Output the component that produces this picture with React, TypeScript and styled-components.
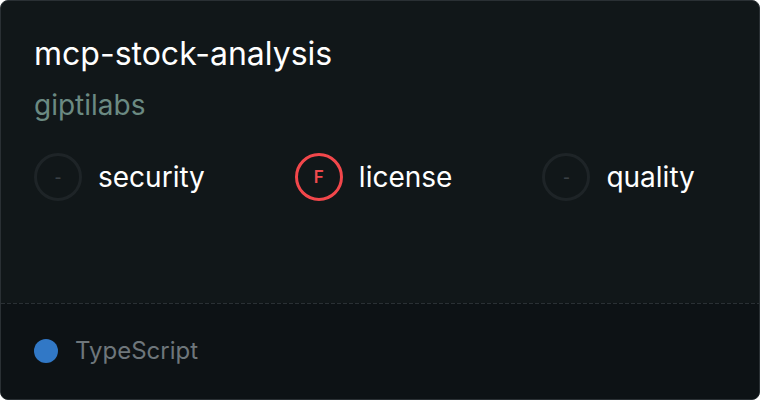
import styled, { createGlobalStyle } from "styled-components";

const Global = createGlobalStyle`
  html, body {
    margin: 0;
    padding: 0;
    background: #ffffff;
  }
  body {
    font-family: Inter, "Noto Sans", sans-serif;
  }
`;

type Score = {
  label: string;
  grade: string;
  failed?: boolean;
};

const scores: Score[] = [
  { label: "security", grade: "-" },
  { label: "license", grade: "F", failed: true },
  { label: "quality", grade: "-" },
];

const App = () => {
  return (
    <>
      <Global />
      <Card>
        <Top>
          <Title>mcp-stock-analysis</Title>
          <Owner>giptilabs</Owner>
          <Scores>
            {scores.map((s) => (
              <ScoreItem key={s.label}>
                <Grade $failed={s.failed}>{s.grade}</Grade>
                <ScoreLabel>{s.label}</ScoreLabel>
              </ScoreItem>
            ))}
          </Scores>
        </Top>
        <Footer>
          <LangDot />
          <LangName>TypeScript</LangName>
        </Footer>
      </Card>
    </>
  );
};

export default App;

const Card = styled.div`
  width: 760px;
  height: 400px;
  box-sizing: border-box;
  border: 1px solid #2a3034;
  border-radius: 8px;
  overflow: hidden;
  display: flex;
  flex-direction: column;
  background: #111719;
`;

const Top = styled.div`
  flex: 1;
  padding: 33px 33px 0;
  display: flex;
  flex-direction: column;
`;

const Title = styled.div`
  color: #ffffff;
  font-size: 32px;
  line-height: 40px;
  font-weight: 400;
`;

const Owner = styled.div`
  color: #6b8a82;
  font-size: 28px;
  line-height: 34px;
  margin-top: 14px;
`;

const Scores = styled.div`
  display: flex;
  align-items: center;
  gap: 90px;
  margin-top: 31px;
`;

const ScoreItem = styled.div`
  display: flex;
  align-items: center;
  gap: 16px;
`;

const Grade = styled.div<{ $failed?: boolean }>`
  width: 48px;
  height: 48px;
  box-sizing: border-box;
  border-radius: 50%;
  border: 3px solid ${(p) => (p.$failed ? "#f2474b" : "#1e2427")};
  color: ${(p) => (p.$failed ? "#f04a4e" : "#3a4045")};
  display: flex;
  align-items: center;
  justify-content: center;
  font-size: ${(p) => (p.$failed ? "17px" : "15px")};
  font-weight: 600;
`;

const ScoreLabel = styled.div`
  color: #ffffff;
  font-size: 28px;
  line-height: 34px;
`;

const Footer = styled.div`
  height: 96px;
  box-sizing: border-box;
  background-color: #0d1215;
  background-image: repeating-linear-gradient(
    to right,
    #2a3034 0,
    #2a3034 4px,
    transparent 4px,
    transparent 6px
  );
  background-size: 100% 1px;
  background-repeat: no-repeat;
  background-position: top left;
  padding: 0 33px;
  display: flex;
  align-items: center;
  gap: 17px;
`;

const LangDot = styled.span`
  width: 24px;
  height: 24px;
  border-radius: 50%;
  background: #3178c6;
`;

const LangName = styled.span`
  color: #6e767b;
  font-size: 24px;
  line-height: 30px;
`;
